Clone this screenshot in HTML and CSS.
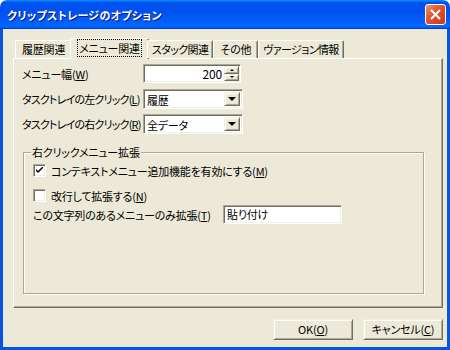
FILE: index.html
```html
<!DOCTYPE html>
<html lang="ja">
<head>
    <meta charset="UTF-8">
    <title>クリップストレージのオプション</title>
    <link rel="stylesheet" href="styles.css">
</head>
<body>
    <div class="window">
        <div class="titlebar">
            <span class="title">クリップストレージのオプション</span>
            <span class="close">
                <svg width="11" height="11" viewBox="0 0 11 11">
                    <path d="M1 1 L10 10 M10 1 L1 10" stroke="#fff" stroke-width="2" fill="none"/>
                </svg>
            </span>
        </div>
        <div class="client">
            <div class="tabs">
                <span class="tab">履歴関連</span>
                <span class="tab active"><span class="focus">メニュー関連</span></span>
                <span class="tab kana">スタック関連</span>
                <span class="tab">その他</span>
                <span class="tab kana">ヴァージョン情報</span>
            </div>
            <div class="panel">
                <div class="row">
                    <span class="label">メニュー幅(<u>W</u>)</span>
                    <div class="spin">
                        <span class="edit num">200</span>
                        <span class="spin-btns">
                            <span class="sbtn"><i class="up"></i></span>
                            <span class="sbtn"><i class="down"></i></span>
                        </span>
                    </div>
                </div>
                <div class="row">
                    <span class="label tight">タスクトレイの左クリック(<u>L</u>)</span>
                    <div class="combo">
                        <span class="value">履歴</span>
                        <span class="drop"><i class="down big"></i></span>
                    </div>
                </div>
                <div class="row">
                    <span class="label tight">タスクトレイの右クリック(<u>R</u>)</span>
                    <div class="combo">
                        <span class="value">全データ</span>
                        <span class="drop"><i class="down big"></i></span>
                    </div>
                </div>
                <fieldset class="group">
                    <legend>右クリックメニュー拡張</legend>
                    <div class="check-row">
                        <span class="box">
                            <svg width="7" height="7" viewBox="0 0 7 7">
                                <path d="M0 2 L0 4 L2 6 L7 1 L7 -1 L2 4 Z" fill="#000"/>
                            </svg>
                        </span>
                        <span>コンテキストメニュー追加機能を有効にする(<u>M</u>)</span>
                    </div>
                    <div class="check-row">
                        <span class="box"></span>
                        <span>改行して拡張する(<u>N</u>)</span>
                    </div>
                    <div class="text-row">
                        <span class="label wide">この文字列のあるメニューのみ拡張(<u>T</u>)</span>
                        <span class="edit text">貼り付け</span>
                    </div>
                </fieldset>
            </div>
            <div class="buttons">
                <span class="btn">OK(<u>O</u>)</span>
                <span class="btn">キャンセル(<u>C</u>)</span>
            </div>
        </div>
    </div>
</body>
</html>
```

FILE: styles.css
```css
body {
    margin: 0;
    background: #fff;
    font-family: "Noto Sans CJK JP", "Liberation Sans", sans-serif;
    font-size: 11px;
    letter-spacing: -0.2px;
    font-feature-settings: "palt";
    color: #000;
    white-space: nowrap;
}
u {
    text-decoration: underline;
    text-underline-offset: 1px;
}
.window {
    width: 450px;
    height: 350px;
    display: flex;
    flex-direction: column;
}
.titlebar {
    height: 29px;
    flex: none;
    border-radius: 7px 7px 0 0;
    background: linear-gradient(#0997ff, #0053ee 8%, #0050ee 40%, #0066ff 88%, #0066ff 93%, #005bff 95%, #003dd7 96%, #003dd7);
    display: flex;
    align-items: center;
    justify-content: space-between;
    padding: 0 4px 0 7px;
}
.title {
    color: #fff;
    font-weight: bold;
    font-size: 11px;
    letter-spacing: 0.3px;
    text-shadow: 1px 1px 0 #0f1089;
}
.close {
    width: 19px;
    height: 19px;
    border: 1px solid #fff;
    border-radius: 3px;
    background: linear-gradient(135deg, #f0916e, #e0532f 45%, #c7391a);
    display: flex;
    align-items: center;
    justify-content: center;
}
.client {
    flex: 1;
    background: #ece9d8;
    border: 3px solid #0855dd;
    border-top: 0;
    padding: 9px 4px 0 10px;
    display: flex;
    flex-direction: column;
}
.tabs {
    height: 20px;
    display: flex;
    align-items: flex-end;
    padding-left: 2px;
    position: relative;
    z-index: 1;
}
.tab {
    height: 17px;
    line-height: 17px;
    padding: 0 6px;
    border-top: 1px solid #fff;
    border-left: 1px solid #fff;
    border-right: 1px solid #716f64;
    box-shadow: inset -1px 0 0 #aca899;
    border-radius: 2px 2px 0 0;
    background: #ece9d8;
}
.tab.kana {
    padding: 0 4px;
    letter-spacing: -0.6px;
}
.tab.active {
    height: 20px;
    line-height: 19px;
    margin: 0 -2px -1px;
    padding: 0 7px;
}
.focus {
    outline: 1px dotted #000;
    outline-offset: 0;
    padding: 0 1px;
}
.panel {
    height: 250px;
    box-sizing: border-box;
    flex: none;
    border: 1px solid #fff;
    border-right-color: #716f64;
    border-bottom-color: #716f64;
    box-shadow: inset -1px -1px 0 #aca899;
    padding: 5px 18px 0 8px;
    display: flex;
    flex-direction: column;
    gap: 6px;
}
.row {
    display: flex;
    align-items: center;
    height: 19px;
}
.label {
    width: 121px;
    flex: none;
}
.label.tight {
    letter-spacing: -0.8px;
}
.edit, .combo {
    box-sizing: border-box;
    background: #fff;
    border: 1px solid #aca899;
    border-right-color: #fff;
    border-bottom-color: #fff;
    box-shadow: inset 1px 1px 0 #716f64, inset -1px -1px 0 #f1efe2;
}
.spin {
    display: flex;
    height: 19px;
    width: 98px;
    background: #fff;
    border: 1px solid #aca899;
    border-right-color: #fff;
    border-bottom-color: #fff;
    box-shadow: inset 1px 1px 0 #716f64, inset -1px -1px 0 #f1efe2;
    box-sizing: border-box;
    padding: 1px 1px 1px 2px;
}
.spin .edit.num {
    flex: 1;
    border: 0;
    box-shadow: none;
    text-align: right;
    line-height: 16px;
    padding-right: 2px;
    font-size: 12px;
}
.spin-btns {
    width: 15px;
    display: flex;
    flex-direction: column;
}
.sbtn, .drop, .btn {
    box-sizing: border-box;
    background: #ece9d8;
    border: 1px solid #f1efe2;
    border-right-color: #716f64;
    border-bottom-color: #716f64;
    box-shadow: inset 1px 1px 0 #fff, inset -1px -1px 0 #aca899;
}
.sbtn {
    flex: 1;
    display: flex;
    align-items: center;
    justify-content: center;
}
i.up, i.down {
    width: 0;
    height: 0;
    border-left: 2px solid transparent;
    border-right: 2px solid transparent;
}
i.up {
    border-bottom: 2px solid #000;
}
i.down {
    border-top: 2px solid #000;
}
i.down.big {
    border-left-width: 4px;
    border-right-width: 4px;
    border-top-width: 4px;
}
.combo {
    width: 100px;
    height: 20px;
    display: flex;
    padding: 2px;
}
.combo .value {
    flex: 1;
    line-height: 16px;
    padding-left: 1px;
}
.drop {
    width: 16px;
    display: flex;
    align-items: center;
    justify-content: center;
}
.group {
    margin: 6px 0 0 1px;
    height: 149px;
    box-sizing: border-box;
    border: 1px solid #aca899;
    box-shadow: inset 1px 1px 0 #fff, 1px 1px 0 #fff;
    padding: 3px 7px 0 9px;
    display: flex;
    flex-direction: column;
}
.group legend {
    padding: 0 1px;
    margin-left: -2px;
    line-height: 14px;
    background: #ece9d8;
}
.check-row {
    display: flex;
    align-items: center;
    height: 17px;
    gap: 5px;
    margin-bottom: 8px;
}
.box {
    width: 13px;
    height: 13px;
    box-sizing: border-box;
    background: #fff;
    border: 1px solid #aca899;
    border-right-color: #fff;
    border-bottom-color: #fff;
    box-shadow: inset 1px 1px 0 #716f64, inset -1px -1px 0 #f1efe2;
    display: flex;
    align-items: center;
    justify-content: center;
}
.text-row {
    display: flex;
    align-items: center;
    height: 19px;
    margin-top: -7px;
}
.label.wide {
    width: 190px;
}
.edit.text {
    width: 119px;
    height: 19px;
    line-height: 15px;
    padding: 1px 3px;
}
.buttons {
    display: flex;
    justify-content: flex-end;
    gap: 10px;
    margin-top: 11px;
}
.btn {
    width: 80px;
    height: 21px;
    line-height: 19px;
    text-align: center;
}
```
